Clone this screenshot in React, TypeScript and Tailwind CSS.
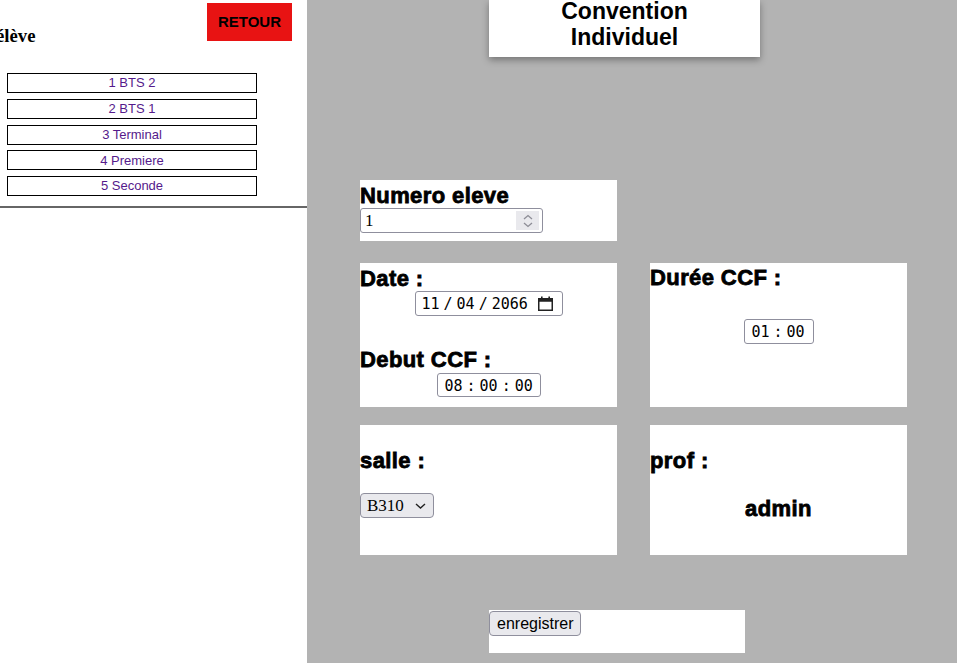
import React from "react";

const classes = ["1 BTS 2", "2 BTS 1", "3 Terminal", "4 Premiere", "5 Seconde"];

const labelCls =
  "font-['Liberation_Sans',Arial,sans-serif] text-[22px] font-bold tracking-[0.4px] text-black [-webkit-text-stroke:0.8px_black]";
const monoCls = "font-['DejaVu_Sans_Mono',monospace] text-[15px] leading-[18px] text-black";

function CalendarIcon() {
  return (
    <svg width="15" height="15" viewBox="0 0 15 15" fill="none">
      <rect x="0.75" y="2.75" width="13.5" height="11.5" stroke="#222" strokeWidth="1.5" />
      <rect x="0.75" y="2.75" width="13.5" height="3" fill="#222" />
      <rect x="3" y="0.5" width="1.6" height="3" fill="#222" />
      <rect x="10.4" y="0.5" width="1.6" height="3" fill="#222" />
    </svg>
  );
}

function Segments({ parts, sep }: { parts: string[]; sep: string }) {
  return (
    <div className={`flex items-center gap-[4px] pt-[1px] ${monoCls}`}>
      {parts.map((p, i) => (
        <React.Fragment key={i}>
          {i > 0 && <span>{sep}</span>}
          <span>{p}</span>
        </React.Fragment>
      ))}
    </div>
  );
}

function FieldBox({ children, className = "" }: { children: React.ReactNode; className?: string }) {
  return (
    <div
      className={`flex items-center rounded-[3px] border border-[#8f8f9d] bg-white ${className}`}
    >
      {children}
    </div>
  );
}

export default function App() {
  return (
    <div className="flex h-[663px] w-[957px] overflow-hidden bg-[#b3b3b3]">
      {/* colonne gauche */}
      <aside className="w-[307px] shrink-0 overflow-hidden bg-white">
        <div className="flex h-[73px] items-start justify-between">
          <h3 className="ml-[-4px] mt-[25px] font-['Liberation_Serif','Times_New_Roman',serif] text-[18.72px] font-bold leading-[22px] text-black">
            élève
          </h3>
          <button className="mr-[15px] mt-[3px] h-[38px] w-[85px] bg-[#e81313] font-['Liberation_Sans',Arial,sans-serif] text-[15px] font-bold text-black">
            RETOUR
          </button>
        </div>
        <ul className="flex flex-col gap-[5.75px] pl-[7px]">
          {classes.map((c) => (
            <li
              key={c}
              className="flex h-[20px] w-[250px] items-center justify-center border border-black font-['Liberation_Sans',Arial,sans-serif] text-[13px] text-[#551a8b]"
            >
              {c}
            </li>
          ))}
        </ul>
        <div className="mt-[10px] h-[2px] w-full bg-[#666]" />
      </aside>

      {/* formulaire */}
      <main className="flex flex-1 flex-col">
        <div className="ml-[182px] flex h-[57px] w-[271px] flex-col items-center bg-white shadow-[0_3px_7px_rgba(0,0,0,0.35)]">
          <h2 className="text-center font-['Liberation_Sans',Arial,sans-serif] text-[23px] font-bold leading-[22px] text-black">
            <span className="block">Convention</span>
            <span className="mt-[4px] block">Individuel</span>
          </h2>
        </div>

        <div className="ml-[53px] mt-[123px] flex h-[61px] w-[257px] flex-col bg-white pt-[3px]">
          <label className={`${labelCls} leading-[25px]`}>Numero eleve</label>
          <FieldBox className="h-[25px] w-[183px] justify-between pl-[4px] pr-[3px]">
            <span className="font-['Liberation_Serif','Times_New_Roman',serif] text-[17px] text-black">1</span>
            <div className="flex h-[19px] w-[23px] flex-col items-center justify-center bg-[#e9e9ed]">
              <svg width="10" height="14" viewBox="0 0 10 14" fill="none">
                <path d="M1 5 L5 1.5 L9 5" stroke="#8d8d96" strokeWidth="1.3" />
                <path d="M1 9 L5 12.5 L9 9" stroke="#8d8d96" strokeWidth="1.3" />
              </svg>
            </div>
          </FieldBox>
        </div>

        <div className="ml-[53px] mt-[22px] flex gap-[33px]">
          <div className="flex h-[144px] w-[257px] flex-col bg-white pt-[4px]">
            <label className={`${labelCls} leading-[24px]`}>Date :</label>
            <FieldBox className="h-[25px] w-[148px] self-center pl-[6px] pr-[9px]">
              <Segments parts={["11", "04", "2066"]} sep="/" />
              <span className="ml-auto flex">
                <CalendarIcon />
              </span>
            </FieldBox>
            <label className={`${labelCls} mt-[31px] leading-[26px]`}>Debut CCF :</label>
            <FieldBox className="h-[24px] w-[104px] self-center pl-[7px]">
              <Segments parts={["08", "00", "00"]} sep=":" />
            </FieldBox>
          </div>
          <div className="flex h-[144px] w-[257px] flex-col bg-white pt-[3px]">
            <label className={`${labelCls} leading-[24px]`}>Durée CCF :</label>
            <FieldBox className="mt-[29px] h-[25px] w-[70px] self-center pl-[7px]">
              <Segments parts={["01", "00"]} sep=":" />
            </FieldBox>
          </div>
        </div>

        <div className="ml-[53px] mt-[18px] flex gap-[33px]">
          <div className="flex h-[130px] w-[257px] flex-col bg-white pt-[24px]">
            <label className={`${labelCls} leading-[24px]`}>salle :</label>
            <div className="mt-[20px] flex h-[25px] w-[74px] items-center rounded-[4px] border border-[#8f8f9d] bg-[#e9e9ed] pl-[6px] pr-[7px] font-['Liberation_Serif','Times_New_Roman',serif] text-[17px] text-black">
              <span>B310</span>
              <svg className="ml-auto" width="11" height="6" viewBox="0 0 11 6" fill="none">
                <path d="M1 1 L5.5 5 L10 1" stroke="#222" strokeWidth="1.4" />
              </svg>
            </div>
          </div>
          <div className="flex h-[130px] w-[257px] flex-col bg-white pt-[24px]">
            <label className={`${labelCls} leading-[24px]`}>prof :</label>
            <p className={`${labelCls} mt-[24px] text-center leading-[24px]`}>admin</p>
          </div>
        </div>

        <div className="ml-[182px] mt-[55px] flex h-[43px] w-[256px] items-start bg-white pt-[1px]">
          <button className="h-[25px] rounded-[4px] border border-[#8f8f9d] bg-[#e9e9ed] px-[7px] pt-[1px] font-['Liberation_Sans',Arial,sans-serif] text-[16px] leading-[20px] text-black">
            enregistrer
          </button>
        </div>
      </main>
    </div>
  );
}
